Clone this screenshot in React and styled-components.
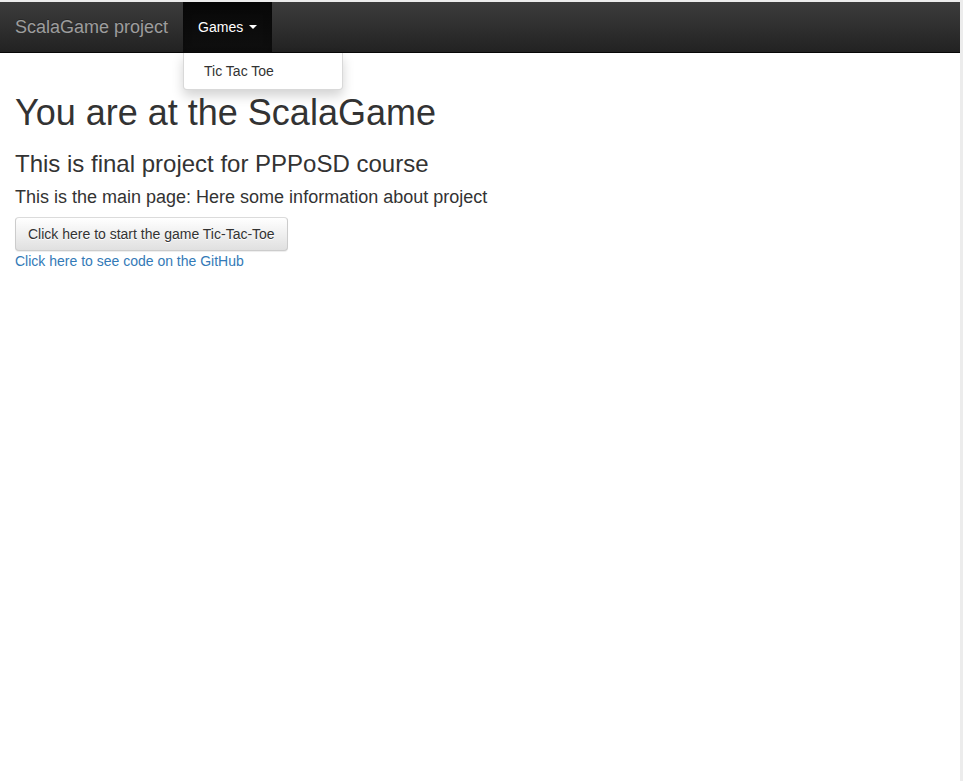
import React from "react";
import styled, { createGlobalStyle } from "styled-components";

const GlobalStyle = createGlobalStyle`
  html, body {
    margin: 0;
    padding: 0;
    background: #ececec;
  }
  body {
    padding: 2px 3px 0 0;
    font-family: "Liberation Sans", Arial, Helvetica, sans-serif;
    font-size: 14px;
    line-height: 1.42857143;
    color: #333;
  }
  * {
    box-sizing: border-box;
  }
`;

const Page = styled.div`
  background: #fff;
  min-height: calc(100vh - 2px);
`;

const Navbar = styled.nav`
  height: 51px;
  display: flex;
  align-items: stretch;
  padding: 0 15px;
  background-image: linear-gradient(to bottom, #3c3c3c 0, #222 100%);
  border-bottom: 1px solid #080808;
`;

const Brand = styled.a`
  display: flex;
  align-items: center;
  height: 50px;
  padding: 15px 15px 15px 0;
  font-size: 18px;
  line-height: 20px;
  color: #9d9d9d;
  text-shadow: 0 -1px 0 rgba(0, 0, 0, 0.25);
  text-decoration: none;
`;

const NavItem = styled.div`
  position: relative;
  height: 50px;
`;

const NavLink = styled.a`
  display: flex;
  align-items: center;
  height: 50px;
  padding: 15px;
  font-size: 14px;
  line-height: 20px;
  color: ${(p) => (p.$active ? "#fff" : "#9d9d9d")};
  text-decoration: none;
  background-image: ${(p) =>
    p.$active ? "linear-gradient(to bottom, #080808 0, #0f0f0f 100%)" : "none"};
  box-shadow: ${(p) =>
    p.$active ? "inset 0 3px 9px rgba(0, 0, 0, 0.25)" : "none"};
  text-shadow: 0 -1px 0 rgba(0, 0, 0, 0.25);
`;

const Caret = styled.span`
  display: inline-block;
  width: 0;
  height: 0;
  margin-left: 6px;
  border-top: 4px solid;
  border-right: 4px solid transparent;
  border-left: 4px solid transparent;
`;

const DropdownMenu = styled.ul`
  position: absolute;
  top: 51px;
  left: 0;
  z-index: 10;
  min-width: 160px;
  margin: 0;
  padding: 5px 0;
  list-style: none;
  background: #fff;
  border: 1px solid rgba(0, 0, 0, 0.15);
  border-top: 0;
  border-radius: 0 0 4px 4px;
  box-shadow: 0 6px 12px rgba(0, 0, 0, 0.175);
`;

const DropdownItem = styled.li`
  a {
    display: block;
    padding: 3px 20px;
    line-height: 1.42857143;
    color: #333;
    white-space: nowrap;
    text-decoration: none;
  }
`;

const Content = styled.main`
  padding: 40px 15px 0;
`;

const Title = styled.h1`
  margin: 0 0 8px;
  font-size: 36px;
  font-weight: 500;
  line-height: 1.1;
`;

const Subtitle = styled.h3`
  margin: 18px 0 11px;
  font-size: 24px;
  font-weight: 500;
  line-height: 1.1;
`;

const Lead = styled.h4`
  margin: 0 0 9px;
  font-size: 18px;
  font-weight: 500;
  line-height: 1.1;
`;

const Button = styled.button`
  display: block;
  padding: 6px 12px;
  font-family: inherit;
  font-size: 14px;
  line-height: 1.42857143;
  color: #333;
  background-image: linear-gradient(to bottom, #fff 0, #e0e0e0 100%);
  border: 1px solid #ccc;
  border-color: #dbdbdb #ccc #ccc;
  border-radius: 4px;
  text-shadow: 0 1px 0 #fff;
  box-shadow: inset 0 1px 0 rgba(255, 255, 255, 0.15),
    0 1px 1px rgba(0, 0, 0, 0.075);
  cursor: pointer;
`;

const Link = styled.a`
  color: #337ab7;
  text-decoration: none;
`;

export default function App() {
  return (
    <>
      <GlobalStyle />
      <Page>
        <Navbar>
          <Brand href="#">ScalaGame project</Brand>
          <NavItem>
            <NavLink href="#" $active>
              Games
              <Caret />
            </NavLink>
            <DropdownMenu>
              <DropdownItem>
                <a href="#">Tic Tac Toe</a>
              </DropdownItem>
            </DropdownMenu>
          </NavItem>
        </Navbar>
        <Content>
          <Title>You are at the ScalaGame</Title>
          <Subtitle>This is final project for PPPoSD course</Subtitle>
          <Lead>This is the main page: Here some information about project</Lead>
          <Button>Click here to start the game Tic-Tac-Toe</Button>
          <Link href="#">Click here to see code on the GitHub</Link>
        </Content>
      </Page>
    </>
  );
}
